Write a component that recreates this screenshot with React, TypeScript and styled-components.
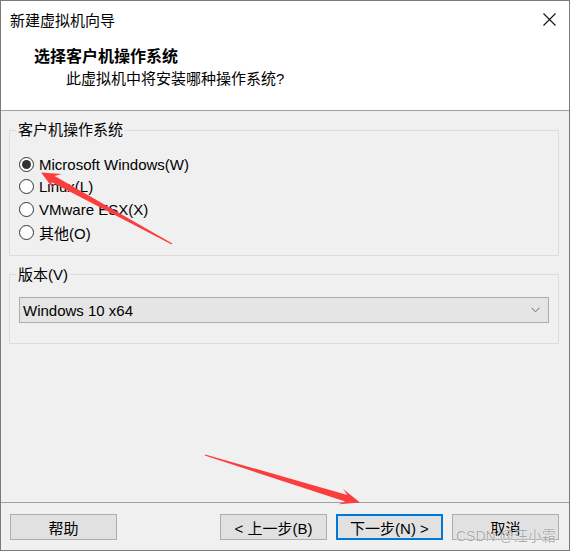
import React from "react";
import styled, { createGlobalStyle } from "styled-components";

const Global = createGlobalStyle`
  html, body { margin: 0; padding: 0; background: #ffffff; }
  body {
    font-family: "Liberation Sans", "Noto Sans CJK SC", sans-serif;
    font-size: 15px;
    color: #000;
  }
  * { box-sizing: border-box; }
`;

const Window = styled.div`
  position: relative;
  width: 570px;
  height: 551px;
  border: 1px solid #7a7a7a;
  display: flex;
  flex-direction: column;
  background: #f0f0f0;
  overflow: hidden;
`;

const TitleBar = styled.div`
  height: 38px;
  background: #fff;
  display: flex;
  align-items: center;
  justify-content: space-between;
  padding: 0 13px 1px 9px;
  font-size: 15px;
`;

const CloseIcon = styled.svg`
  width: 13px;
  height: 13px;
  display: block;
`;

const Header = styled.div`
  height: 72px;
  background: #fff;
  border-bottom: 1px solid #a0a0a0;
  padding-top: 7px;
  display: flex;
  flex-direction: column;
`;

const Heading = styled.div`
  font-weight: bold;
  font-size: 16px;
  line-height: 22px;
  padding-left: 33px;
`;

const SubHeading = styled.div`
  font-size: 15px;
  line-height: 22px;
  padding-left: 65px;
`;

const Body = styled.div`
  flex: 1;
  padding: 9px 10px 0 8px;
  display: flex;
  flex-direction: column;
  gap: 9px;
`;

const Group = styled.fieldset<{ $pt: number; $pb: number }>`
  margin: 0;
  min-width: 0;
  border: 1px solid #dcdcdc;
  padding: ${(p) => p.$pt}px 9px ${(p) => p.$pb}px 9px;
  display: flex;
  flex-direction: column;
`;

const Legend = styled.legend`
  padding: 0 2px;
  margin-left: -3px;
  line-height: 20px;
  font-size: 15px;
`;

const RadioRow = styled.label`
  height: 22.67px;
  display: flex;
  align-items: center;
  gap: 5px;
  white-space: nowrap;
`;

const RadioCircle = styled.span<{ $checked?: boolean }>`
  width: 15px;
  height: 15px;
  border-radius: 50%;
  border: 1px solid #333;
  background: #fff;
  display: flex;
  align-items: center;
  justify-content: center;
  flex: none;
  &::after {
    content: "";
    width: 9px;
    height: 9px;
    border-radius: 50%;
    background: ${(p) => (p.$checked ? "#333" : "transparent")};
  }
`;

const Select = styled.div`
  height: 26px;
  border: 1px solid #adadad;
  background: #e5e5e5;
  display: flex;
  align-items: center;
  justify-content: space-between;
  padding: 1px 8px 0 3px;
`;

const Chevron = styled.svg`
  width: 9px;
  height: 6px;
  display: block;
`;

const Footer = styled.div`
  height: 48px;
  border-top: 1px solid #a0a0a0;
  padding: 11px 10px 0 9px;
  display: flex;
  align-items: flex-start;
`;

const ButtonGroup = styled.div`
  margin-left: auto;
  display: flex;
  gap: 9px;
`;

const Button = styled.button<{ $primary?: boolean }>`
  width: 107px;
  height: 26px;
  margin: 0;
  padding: 0;
  font-family: inherit;
  font-size: 15px;
  color: #000;
  background: #e1e1e1;
  border: ${(p) => (p.$primary ? "2px solid #0078d7" : "1px solid #adadad")};
  display: flex;
  align-items: center;
  justify-content: center;
`;

const Watermark = styled.div`
  position: absolute;
  left: 455px;
  top: 524px;
  line-height: 22px;
  font-size: 14px;
  color: rgba(140, 140, 140, 0.75);
  text-shadow: 0 0 1px #fff, 0 0 1px #fff;
  pointer-events: none;
  white-space: nowrap;
`;

const Overlay = styled.svg`
  position: absolute;
  left: -1px;
  top: -1px;
  width: 570px;
  height: 551px;
  pointer-events: none;
`;

function arrowPoints(
  x1: number,
  y1: number,
  x2: number,
  y2: number,
  headLen: number,
  headW: number,
  shaftW: number
): string {
  const dx = x2 - x1;
  const dy = y2 - y1;
  const L = Math.hypot(dx, dy);
  const ux = dx / L;
  const uy = dy / L;
  const px = -uy;
  const py = ux;
  const bx = x2 - ux * headLen;
  const by = y2 - uy * headLen;
  const nx = x2 - ux * headLen * 0.72;
  const ny = y2 - uy * headLen * 0.72;
  const pts: [number, number][] = [
    [x1 + px * 0.6, y1 + py * 0.6],
    [nx + (px * shaftW) / 2, ny + (py * shaftW) / 2],
    [bx + (px * headW) / 2, by + (py * headW) / 2],
    [x2, y2],
    [bx - (px * headW) / 2, by - (py * headW) / 2],
    [nx - (px * shaftW) / 2, ny - (py * shaftW) / 2],
    [x1 - px * 0.6, y1 - py * 0.6],
  ];
  return pts.map((p) => `${p[0].toFixed(1)},${p[1].toFixed(1)}`).join(" ");
}

const options = [
  { label: "Microsoft Windows(W)", checked: true },
  { label: "Linux(L)", checked: false },
  { label: "VMware ESX(X)", checked: false },
  { label: "其他(O)", checked: false },
];

export default function App() {
  return (
    <>
      <Global />
      <Window>
        <TitleBar>
          <span>新建虚拟机向导</span>
          <CloseIcon viewBox="0 0 13 13">
            <path d="M0.5 0.5 L12.5 12.5 M12.5 0.5 L0.5 12.5" stroke="#111" strokeWidth="1.1" fill="none" />
          </CloseIcon>
        </TitleBar>
        <Header>
          <Heading>选择客户机操作系统</Heading>
          <SubHeading>此虚拟机中将安装哪种操作系统?</SubHeading>
        </Header>
        <Body>
          <Group $pt={13} $pb={11}>
            <Legend>客户机操作系统</Legend>
            {options.map((o) => (
              <RadioRow key={o.label}>
                <RadioCircle $checked={o.checked} />
                <span>{o.label}</span>
              </RadioRow>
            ))}
          </Group>
          <Group $pt={12} $pb={20}>
            <Legend>版本(V)</Legend>
            <Select>
              <span>Windows 10 x64</span>
              <Chevron viewBox="0 0 9 6">
                <path d="M0.5 0.8 L4.5 4.8 L8.5 0.8" stroke="#666" strokeWidth="1" fill="none" />
              </Chevron>
            </Select>
          </Group>
        </Body>
        <Footer>
          <Button>帮助</Button>
          <ButtonGroup>
            <Button>&lt; 上一步(B)</Button>
            <Button $primary>下一步(N) &gt;</Button>
            <Button>取消</Button>
          </ButtonGroup>
        </Footer>
        <Watermark>CSDN @汪小霜</Watermark>
        <Overlay viewBox="0 0 570 551">
          <polygon points={arrowPoints(172, 244, 41, 172.5, 19, 17, 7)} fill="#fa3e3e" />
          <polygon points={arrowPoints(205, 455, 360, 502.5, 20, 16, 7)} fill="#fa3e3e" />
        </Overlay>
      </Window>
    </>
  );
}
